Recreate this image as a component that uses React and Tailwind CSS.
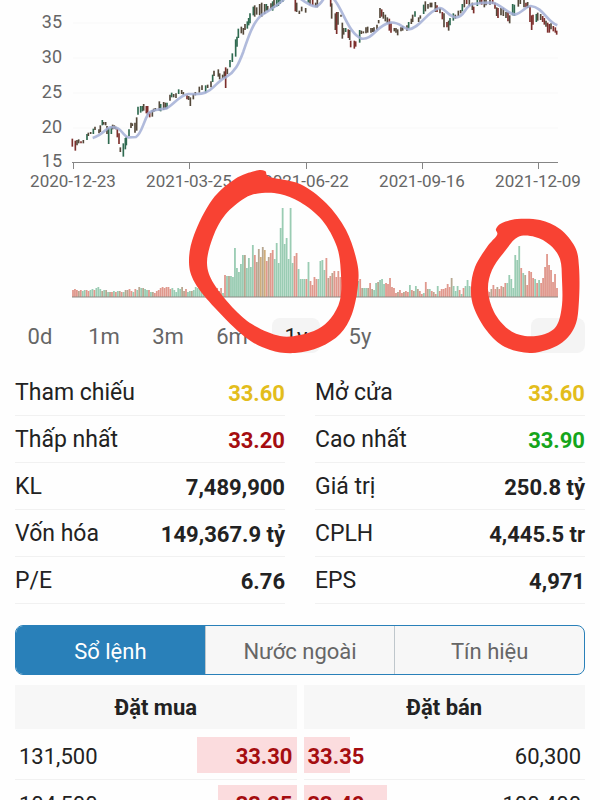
const yTicks = [
  { label: "35", y: 22 },
  { label: "30", y: 57 },
  { label: "25", y: 92 },
  { label: "20", y: 127 },
  { label: "15", y: 161 },
];

const xTicks = [
  { label: "2020-12-23", x: 73 },
  { label: "2021-03-25", x: 189 },
  { label: "2021-06-22", x: 306 },
  { label: "2021-09-16", x: 422 },
  { label: "2021-12-09", x: 538 },
];

// x, high, low in thirds of a chart unit, then the colour: r(ed), g(reen), n(eutral)
const candles = `
217 416 440 r;226 422 452 r;231 420 436 n;236 418 430 n;243 424 430 r;250 420 430 n;261 402 420 g;265 398 408 n;272 396 402 n;
280 386 402 g;285 380 390 n;297 388 400 n;301 376 396 n;307 360 376 g;311 366 374 n;317 366 376 n;321 378 402 n;326 384 432 g;
334 380 402 g;338 374 388 n;343 376 386 n;347 380 388 n;352 386 412 r;357 400 432 r;361 442 456 n;370 430 470 g;376 414 448 g;
379 410 436 g;387 388 408 g;393 368 384 n;397 370 378 n;405 368 398 n;410 352 392 n;414 320 344 g;422 318 338 g;427 318 334 g;
431 312 332 n;439 318 340 r;443 318 344 r;449 336 352 r;457 330 350 n;461 326 336 n;466 324 332 n;478 304 332 n;482 312 334 g;
491 306 330 n;496 308 326 n;501 308 326 g;510 284 302 n;515 278 292 g;521 282 292 n;528 280 294 n;536 268 282 g;545 270 282 n;
550 276 284 n;561 286 298 r;566 288 300 n;571 292 318 n;580 282 298 n;586 276 286 n;598 260 278 n;606 256 270 n;617 256 278 g;
623 254 264 n;633 244 262 n;638 224 246 g;642 212 228 n;655 208 230 n;659 220 238 n;668 224 236 n;673 214 234 n;677 202 264 r;
682 206 222 n;690 180 202 g;697 160 186 g;707 118 170 g;711 110 140 g;715 86 114 g;724 80 100 n;730 84 104 n;735 72 90 n;
742 64 86 g;746 54 76 g;750 40 70 g;760 20 46 g;764 16 50 n;770 22 44 n;779 12 46 n;785 8 50 n;794 12 42 n;799 12 32 g;
803 18 34 n;813 10 28 n;818 4 32 g;822 0 24 n;830 0 20 g;835 0 18 g;840 0 12 g;848 0 6 g;886 0 34 r;890 8 36 n;898 32 42 n;
905 20 34 n;917 24 38 n;925 0 8 g;930 0 14 n;938 0 16 r;947 8 20 n;952 0 22 n;992 0 20 r;995 10 56 n;1006 40 90 n;
1010 36 102 r;1014 36 74 n;1023 44 50 n;1027 68 116 n;1031 84 104 n;1037 84 96 g;1045 88 114 r;1049 90 120 n;1052 122 142 r;
1063 122 146 r;1067 124 140 r;1079 90 128 g;1084 92 102 n;1090 94 100 n;1098 82 100 n;1103 80 98 n;1113 84 98 n;1118 84 96 n;
1122 82 96 n;1131 74 90 n;1136 60 70 n;1140 24 54 n;1145 28 50 r;1150 36 56 n;1156 44 64 n;1162 52 70 n;1168 56 92 r;
1173 70 98 r;1183 84 94 n;1188 84 98 n;1193 88 106 n;1203 82 94 n;1208 78 92 n;1221 76 92 n;1226 66 86 g;1234 56 72 n;
1238 44 66 n;1245 34 50 g;1256 52 66 n;1261 46 56 n;1271 14 42 g;1276 4 34 n;1284 12 26 n;1291 8 22 n;1295 8 22 n;
1306 6 36 n;1311 16 36 r;1320 24 40 n;1327 36 58 r;1332 40 82 n;1341 66 82 r;1346 62 92 n;1350 54 76 g;1360 40 62 g;
1366 44 56 n;1375 32 48 n;1382 30 40 n;1387 12 34 g;1393 0 22 n;1400 0 12 r;1408 0 18 n;1417 8 30 n;1421 20 40 r;
1432 0 18 g;1440 0 10 n;1445 0 14 r;1453 0 22 n;1458 0 16 n;1470 0 14 n;1478 0 12 r;1485 8 26 r;1490 22 48 n;1494 24 54 r;
1503 24 46 n;1510 24 48 n;1518 36 54 n;1524 36 64 r;1529 46 70 n;1538 12 46 g;1543 14 48 g;1555 0 20 n;1561 0 12 n;
1572 0 22 n;1578 8 22 r;1583 6 24 n;1590 20 66 r;1595 46 90 r;1599 44 74 r;1609 42 66 g;1613 38 62 n;1622 42 60 n;
1628 48 66 r;1633 54 74 r;1638 62 80 n;1643 68 98 r;1648 72 98 r;1653 70 88 n;1660 78 94 r;1666 82 98 r;1670 92 104 r`
  .trim()
  .split(";")
  .map((row) => {
    const [x, high, low, tone] = row.trim().split(" ");
    return { x: Number(x), high: Number(high), low: Number(low), tone };
  });

const candleColors = { r: "#7d2f2c", g: "#2f6a50", n: "#54483a" };

const volumes = `
7r 8r 7r 6t 7r 6g 7g 7r 6r 7g 8g 7r 9g 10g 8g 6t 7g 7t 5g 5t 5r 6g 5r 6g 6t 5r 5g 7t 7t 8r 6r 5g 8r 7g 10t 9g 9t 8g 7g 7r
5g 5t 4r 6r 7r 9r 10r 9r 10r 10r 8r 9g 7g 5g 9g 8g 10t 6t 8r 5g 6g 6t 7g 10g 9g 13g 8g 6g 6g 5g 6g 5t 5r 10r 9r 6t 9r 4g`
  .trim()
  .split(/\s+/);

// The first stretch holds 78 sessions, the rest of the year follows
const moreVolumes = `
22r 21g 21t 21g 20g 49g 29g 25g 33g 42g 42t 29g 39g 30g 52g 42r 35t 48t 40y 50t 47y 36r 40t 44r 47r 38g 54g 34g 69g 89g 53g 59g
38g 89g 34g 41r 44r 28g 18g 18g 18g 18r 35g 16r 12r 20r 18r 18g 36g 37g 27g 39r 19t 21r 24t 26r 20r 26r 20r 20r 19r 17r 21g
22r 15t 18r 20r 16g 18r 9t 9g 9g 9t 14r 8t 7g 14g 15t 17g 18g 13g 14r 13r 19r 10r 9r 4r 5t 7r 4r 5t 6r 5r 12g 7r 6t 11g
8t 6r 3r 4g 15r 8t 8g 6r 5t 3r 11g 6r 8r 8r 9r 13r 10r 19t 11g 6g 11g 7r 3g 9r 11g 17g 11g 10r 9r 8r 11g 9r 7r 8r 9r 6r
5r 8t 12r 8r 10t 8r 11r 10t 14r 14g 22g 18g 9g 42g 37g 51g 29r 24g 22t 12r 26r 25r 19r 18g 14r 17g 14r 19r 30r 43r 32r 27r
15r 23r 9r`
  .trim()
  .split(/\s+/);

const volumeColors = { r: "#e0988d", g: "#9accb3", t: "#b7a791", y: "#cfac7a" };

const toBars = (list, from, to) =>
  list.map((item, i) => ({
    x: from + ((to - from) * i) / (list.length - 1),
    height: parseInt(item, 10),
    tone: item.slice(-1),
  }));

const volumeBars = [
  ...toBars(volumes, 73, 223),
  ...toBars(moreVolumes, 225, 557),
];

const averagePath =
  "M278 414C300 408 310 396 322 386S345 382 355 386S372 410 385 412L408 411C425 400 428 372 445 340C455 328 475 330 500 325C525 310 540 285 565 282C590 282 610 285 630 270C650 255 660 238 680 230C705 215 715 195 730 155C745 110 760 65 785 45C810 30 835 15 855 -5" +
  "M900 -5Q930 18 948 20Q960 15 972 -5" +
  "M1000 -5C1030 30 1045 100 1085 116C1120 120 1130 75 1170 68C1195 64 1205 82 1225 88C1260 85 1280 35 1318 24C1335 22 1345 52 1370 52C1395 50 1395 15 1420 12C1445 8 1460 8 1475 8C1500 10 1520 40 1545 44C1565 40 1575 20 1592 18C1630 22 1640 65 1672 76";

const rings = [
  [
    [[189, 262], [194, 235], [212, 200], [235, 179], [255, 171], [265, 171], [270, 177], [300, 184], [326, 203], [346, 230], [357, 262], [358, 285], [352, 314], [340, 334], [320, 347], [295, 353], [270, 350], [245, 337], [215, 308], [195, 283]],
    [[207, 263], [213, 237], [225, 215], [245, 198], [262, 193], [280, 194], [300, 202], [322, 220], [337, 247], [341, 275], [340, 300], [331, 318], [318, 329], [300, 335], [280, 336], [255, 326], [235, 310], [214, 284]],
  ],
  [
    [[471, 288], [475, 267], [487, 247], [497, 235], [496, 229], [502, 223], [517, 219], [540, 220], [560, 229], [575, 247], [579, 267], [579, 300], [575, 326], [560, 344], [532, 353], [505, 347], [487, 331], [474, 308]],
    [[488, 290], [492, 270], [505, 251], [518, 237], [535, 237], [550, 245], [560, 259], [562, 280], [562, 305], [557, 325], [545, 334], [525, 336], [508, 329], [494, 312]],
  ],
];

const ranges = ["0d", "1m", "3m", "6m", "1y", "5y"];

const stats = [
  { label: "Tham chiếu", value: "33.60", color: "text-[#e3bd1c]" },
  { label: "Mở cửa", value: "33.60", color: "text-[#e3bd1c]" },
  { label: "Thấp nhất", value: "33.20", color: "text-[#a50d10]" },
  { label: "Cao nhất", value: "33.90", color: "text-[#15a51b]" },
  { label: "KL", value: "7,489,900" },
  { label: "Giá trị", value: "250.8 tỷ" },
  { label: "Vốn hóa", value: "149,367.9 tỷ" },
  { label: "CPLH", value: "4,445.5 tr" },
  { label: "P/E", value: "6.76" },
  { label: "EPS", value: "4,971" },
];

const tabs = ["Sổ lệnh", "Nước ngoài", "Tín hiệu"];

const bids = [
  { price: "33.30", volume: "131,500", share: 71 },
  { price: "33.25", volume: "104,500", share: 56 },
];

const asks = [
  { price: "33.35", volume: "60,300", share: 33 },
  { price: "33.40", volume: "100,400", share: 59 },
];

// Closed smooth curve through all points
function smoothLoop(points) {
  const n = points.length;
  let d = `M${points[0].join(" ")}`;
  for (let i = 0; i < n; i++) {
    const p0 = points[(i - 1 + n) % n];
    const p1 = points[i];
    const p2 = points[(i + 1) % n];
    const p3 = points[(i + 2) % n];
    d += `C${p1[0] + (p2[0] - p0[0]) / 6} ${p1[1] + (p2[1] - p0[1]) / 6} `;
    d += `${p2[0] - (p3[0] - p1[0]) / 6} ${p2[1] - (p3[1] - p1[1]) / 6} `;
    d += `${p2[0]} ${p2[1]}`;
  }
  return d + "Z";
}

function StockChart() {
  return (
    <svg viewBox="0 0 600 318" className="block w-full" role="img">
      {yTicks.map((tick) => (
        <g key={tick.label}>
          {tick.label !== "15" && (
            <line x1="73" x2="558" y1={tick.y + 1} y2={tick.y + 1} stroke="#f8f8f8" />
          )}
          <text
            x="62"
            y={tick.y + 6}
            textAnchor="end"
            className="fill-[#666] text-[18px]"
          >
            {tick.label}
          </text>
        </g>
      ))}

      <g transform="scale(0.33333)">
        {candles.map((c) => (
          <line
            key={c.x}
            x1={c.x}
            x2={c.x}
            y1={c.high}
            y2={c.low}
            stroke={candleColors[c.tone]}
            strokeWidth="5"
          />
        ))}
        <path
          d={averagePath}
          fill="none"
          stroke="#a3afd6"
          strokeOpacity="0.85"
          strokeWidth="8"
        />
      </g>

      <path d="M72 162.5H558" stroke="#858585" />
      {xTicks.map((tick) => (
        <g key={tick.label}>
          <line x1={tick.x + 0.5} x2={tick.x + 0.5} y1="162" y2="169" stroke="#858585" />
          <text
            x={tick.x}
            y="187"
            textAnchor="middle"
            className="fill-[#666] text-[17px]"
          >
            {tick.label}
          </text>
        </g>
      ))}

      {volumeBars.map((bar, i) => (
        <rect
          key={i}
          x={bar.x - 0.9}
          y={297 - bar.height}
          width="1.8"
          height={bar.height}
          fill={volumeColors[bar.tone]}
        />
      ))}
      <path d="M72 297H558" stroke="#8d8a84" />
    </svg>
  );
}

function RangePicker() {
  return (
    <div className="flex items-center justify-between pr-[15px] pl-4 text-[22px] text-[#666]">
      <div className="flex gap-4">
        {ranges.map((range) => (
          <button
            key={range}
            type="button"
            className={
              range === "1y"
                ? "h-[35px] w-12 rounded-lg bg-[#f4f4f4] pt-0.5 text-[#222]"
                : "h-[35px] w-12 rounded-lg pt-0.5"
            }
          >
            {range}
          </button>
        ))}
      </div>
      <button
        type="button"
        aria-label="Menu"
        className="h-[35px] w-[54px] rounded-lg bg-[#f4f4f4]"
      />
    </div>
  );
}

function Depth({ title, rows, side }) {
  const buying = side === "buy";

  return (
    <table className="w-full table-fixed border-collapse">
      <thead>
        <tr>
          <th colSpan={2} className="p-0 pb-[3px] font-bold">
            <div className="h-11 bg-[#f7f7f7] leading-[46px]">{title}</div>
          </th>
        </tr>
      </thead>
      <tbody>
        {rows.map((row) => {
          const volume = (
            <td
              key="volume"
              className={buying ? "pt-[3px] pl-1" : "pt-[3px] pr-1 text-right"}
            >
              {row.volume}
            </td>
          );
          const price = (
            <td key="price" className="p-0">
              <div
                className={
                  buying
                    ? "ml-auto h-9 bg-[#fbdcde] pr-1 text-right leading-[39px] font-bold text-[#a50d10]"
                    : "h-9 bg-[#fbdcde] pl-1 leading-[39px] font-bold whitespace-nowrap text-[#a50d10]"
                }
                style={{ width: `${row.share}%` }}
              >
                {row.price}
              </div>
            </td>
          );
          return (
            <tr key={row.price} className="h-[47px] border-b border-[#f1f1f1]">
              {buying ? [volume, price] : [price, volume]}
            </tr>
          );
        })}
      </tbody>
    </table>
  );
}

export default function App() {
  return (
    <main className="h-screen overflow-hidden bg-[#fefefe] font-[Roboto,sans-serif] text-[22px] text-[#222]">
      <section className="relative">
        <StockChart />
        <RangePicker />
        <svg
          viewBox="0 0 600 360"
          className="pointer-events-none absolute top-0 left-0 w-full"
          aria-hidden="true"
        >
          {rings.map(([outer, inner], i) => (
            <path
              key={i}
              d={smoothLoop(outer) + smoothLoop(inner)}
              fill="#f84233"
              fillRule="evenodd"
            />
          ))}
        </svg>
      </section>

      <dl className="mt-4 grid grid-cols-2 gap-x-[30px] px-[15px]">
        {stats.map((stat) => (
          <div
            key={stat.label}
            className="flex h-[47px] items-center justify-between border-b border-[#f1f1f1] pt-0.5"
          >
            <dt className="text-[23px]">{stat.label}</dt>
            <dd className={stat.color ? `font-bold ${stat.color}` : "font-bold"}>
              {stat.value}
            </dd>
          </div>
        ))}
      </dl>

      <div className="px-[15px] pt-[21px]">
        <div className="flex h-[50px] overflow-hidden rounded-lg border border-[#2980b9] bg-[#f7f7f7] text-[#666]">
          {tabs.map((tab, i) => (
            <button
              key={tab}
              type="button"
              className={
                i === 0
                  ? "flex-1 bg-[#2980b9] pt-0.5 text-white"
                  : "flex-1 border-l border-[#bfc7cc] pt-0.5"
              }
            >
              {tab}
            </button>
          ))}
        </div>

        <div className="mt-[10px] grid grid-cols-2 items-start gap-[7px]">
          <Depth title="Đặt mua" rows={bids} side="buy" />
          <Depth title="Đặt bán" rows={asks} side="sell" />
        </div>
      </div>
    </main>
  );
}
